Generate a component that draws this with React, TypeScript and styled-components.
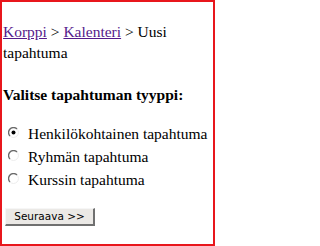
import React from "react";
import styled, { createGlobalStyle } from "styled-components";

const Global = createGlobalStyle`
  html, body { margin: 0; padding: 0; background: #fff; }
`;

const Frame = styled.div`
  box-sizing: border-box;
  width: 215px;
  height: 246px;
  border: 2px solid #e8161c;
  padding: 19px 0 0 1px;
  font-family: "Liberation Serif", "Times New Roman", serif;
  font-size: 15.5px;
  line-height: 21px;
  color: #000;
  display: flex;
  flex-direction: column;
`;

const Crumbs = styled.div`
  margin: 0;
`;

const Link = styled.a`
  color: #551a8b;
  text-decoration: underline;
`;

const Heading = styled.div`
  font-weight: bold;
  margin-top: 21px;
`;

const Options = styled.div`
  margin-top: 17px;
  display: flex;
  flex-direction: column;
`;

const Row = styled.label`
  height: 23px;
  line-height: 23px;
  display: flex;
  align-items: center;
  white-space: nowrap;
`;

const RadioBox = styled.span`
  width: 25px;
  height: 23px;
  display: flex;
  align-items: center;
  padding-left: 5px;
  box-sizing: border-box;
  margin-top: -3px;
  flex-shrink: 0;
`;

const Button = styled.button`
  margin-top: 17px;
  margin-left: 2px;
  align-self: flex-start;
  box-sizing: border-box;
  width: 90px;
  height: 18px;
  padding: 0;
  background: #ebe9e6;
  border-style: solid;
  border-width: 1px 2px 2px 1px;
  border-color: #f6f6f6 #707070 #707070 #f6f6f6;
  font-family: "DejaVu Sans", Verdana, sans-serif;
  font-size: 10.5px;
  color: #000;
  line-height: 15px;
`;

const Radio = ({ checked }: { checked?: boolean }) => (
  <RadioBox>
    <svg width="11" height="11" viewBox="0 0 11 11">
      <path d="M9 2 A4.6 4.6 0 0 0 2 9" fill="none" stroke="#6a6a6a" strokeWidth="1.4" />
      <path d="M2 9 A4.6 4.6 0 0 0 9 2" fill="none" stroke="#ececec" strokeWidth="1" />
      {checked && <circle cx="5.5" cy="5.5" r="2" fill="#000" />}
    </svg>
  </RadioBox>
);

export default function App() {
  return (
    <>
      <Global />
      <Frame>
        <Crumbs>
          <Link href="#">Korppi</Link> &gt; <Link href="#">Kalenteri</Link> &gt; Uusi tapahtuma
        </Crumbs>
        <Heading>Valitse tapahtuman tyyppi:</Heading>
        <Options>
          <Row>
            <Radio checked />
            Henkilökohtainen tapahtuma
          </Row>
          <Row>
            <Radio />
            Ryhmän tapahtuma
          </Row>
          <Row>
            <Radio />
            Kurssin tapahtuma
          </Row>
        </Options>
        <Button>Seuraava &gt;&gt;</Button>
      </Frame>
    </>
  );
}
